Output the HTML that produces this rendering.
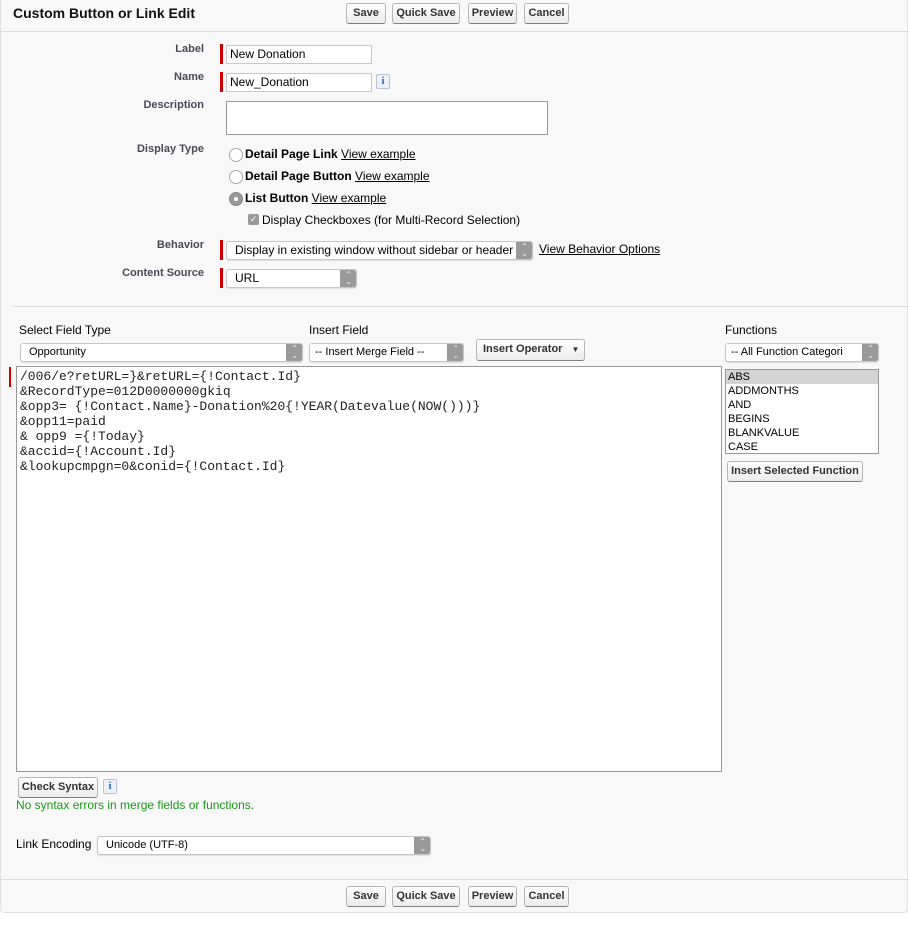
<!DOCTYPE html>
<html><head><style>
*{box-sizing:border-box;margin:0;padding:0}
body{width:908px;height:949px;background:#fff;font-family:"Liberation Sans",Arial,sans-serif;font-size:12px;color:#000;position:relative;overflow:hidden}
.a{position:absolute}
#panel{left:0;top:0;width:908px;height:913px;background:#f8f8f8;border:1px solid #e0e0e0;border-top:none;border-radius:0 0 4px 4px}
.hr{position:absolute;height:1px;background:#dcdcdc}
.btn{position:absolute;height:21px;border:1px solid #b5b5b5;border-bottom-color:#7f7f7f;border-radius:3px;background:linear-gradient(#fff,#ececec);font-weight:bold;font-size:11px;color:#333;text-align:center;line-height:19px}
.lbl{position:absolute;right:704px;font-weight:bold;font-size:11px;color:#4a4a56;text-align:right;white-space:nowrap}
.req{position:absolute;width:3px;height:20px;background:#c00}
.inp{position:absolute;height:19px;background:#fff;border:1px solid #c8c8c8;font-size:12px;padding-left:3px;line-height:17px}
.sel{position:absolute;height:19px;background:#fff;border:1px solid #c6c6c6;border-radius:3px;font-size:12px;padding-left:8px;line-height:17px;box-shadow:0 1px 1px #ddd;overflow:hidden;white-space:nowrap}
.sel:after{content:"";position:absolute;right:0;top:0;width:16px;height:17px;background:#9a9a9a;border-radius:0 2px 2px 0}
.sel i{position:absolute;right:4px;top:1px;z-index:2;color:#eee;font-style:normal;font-size:8px;line-height:7px;text-align:center}
.rad{position:absolute;width:14px;height:14px;border-radius:50%;border:1px solid #aaa;background:#fff}
.t{position:absolute;white-space:nowrap}
u{text-decoration:underline}
.info{position:absolute;width:14px;height:15px;border:1px solid #b8c4d4;border-radius:2px;background:#eef2f8;color:#2a6bd1;font-family:"Liberation Serif",serif;font-weight:bold;font-size:11px;text-align:center;line-height:13px}
.mono{font-family:"Liberation Mono",monospace;font-size:13px;line-height:15px;color:#222}
</style></head><body>
<div id="panel" class="a"></div>
<div class="t" style="left:13px;top:5px;font-size:14px;font-weight:bold;color:#111">Custom Button or Link Edit</div>
<div class="btn" style="left:346px;top:3px;width:40px">Save</div>
<div class="btn" style="left:392px;top:3px;width:68px">Quick Save</div>
<div class="btn" style="left:468px;top:3px;width:49px">Preview</div>
<div class="btn" style="left:524px;top:3px;width:45px">Cancel</div>
<div class="hr" style="left:1px;top:31px;width:907px"></div>

<div class="lbl" style="top:43px">Label</div>
<div class="req" style="left:220px;top:44px"></div>
<div class="inp" style="left:226px;top:45px;width:146px">New Donation</div>
<div class="lbl" style="top:71px">Name</div>
<div class="req" style="left:220px;top:72px"></div>
<div class="inp" style="left:226px;top:73px;width:146px">New_Donation</div>
<div class="info" style="left:376px;top:74px">i</div>
<div class="lbl" style="top:99px">Description</div>
<div class="inp" style="left:226px;top:101px;width:322px;height:34px;border-color:#999"></div>
<div class="lbl" style="top:143px">Display Type</div>
<div class="rad" style="left:229px;top:148px"></div>
<div class="t" style="left:245px;top:147px"><b>Detail Page Link</b> <u>View example</u></div>
<div class="rad" style="left:229px;top:170px"></div>
<div class="t" style="left:245px;top:169px"><b>Detail Page Button</b> <u>View example</u></div>
<div class="rad" style="left:229px;top:192px;background:#999;border-color:#888"><div style="position:absolute;left:4px;top:4px;width:4px;height:4px;background:#fff;border-radius:50%"></div></div>
<div class="t" style="left:245px;top:191px"><b>List Button</b> <u>View example</u></div>
<div class="a" style="left:248px;top:214px;width:11px;height:11px;background:#999;border-radius:2px;color:#fff;font-size:9px;line-height:11px;text-align:center">✓</div>
<div class="t" style="left:262px;top:213px">Display Checkboxes (for Multi-Record Selection)</div>
<div class="lbl" style="top:239px">Behavior</div>
<div class="req" style="left:220px;top:240px"></div>
<div class="sel" style="left:226px;top:241px;width:307px">Display in existing window without sidebar or header<i>⌃<br>⌄</i></div>
<div class="t" style="left:539px;top:242px"><u>View Behavior Options</u></div>
<div class="lbl" style="top:267px">Content Source</div>
<div class="req" style="left:220px;top:268px"></div>
<div class="sel" style="left:226px;top:269px;width:131px">URL<i>⌃<br>⌄</i></div>
<div class="hr" style="left:13px;top:306px;width:895px"></div>

<div class="t" style="left:19px;top:323px">Select Field Type</div>
<div class="t" style="left:309px;top:323px">Insert Field</div>
<div class="t" style="left:725px;top:323px">Functions</div>
<div class="sel" style="left:20px;top:343px;width:283px;font-size:11px">Opportunity<i>⌃<br>⌄</i></div>
<div class="sel" style="left:309px;top:343px;width:155px;padding-left:5px;font-size:11px">-- Insert Merge Field --<i>⌃<br>⌄</i></div>
<div class="btn" style="left:476px;top:339px;width:109px;height:22px;text-align:left;padding-left:6px">Insert Operator <span style="font-size:8px;margin-left:6px">▼</span></div>
<div class="sel" style="left:725px;top:343px;width:154px;padding-left:5px;font-size:11px">-- All Function Categori<i>⌃<br>⌄</i></div>
<div class="req" style="left:9px;top:367px;width:2px;height:20px"></div>
<div class="inp mono" style="left:16px;top:366px;width:706px;height:406px;border-color:#999;padding:2px 3px">/006/e?retURL=}&amp;retURL={!Contact.Id}<br>&amp;RecordType=012D0000000gkiq<br>&amp;opp3= {!Contact.Name}-Donation%20{!YEAR(Datevalue(NOW()))}<br>&amp;opp11=paid<br>&amp; opp9 ={!Today}<br>&amp;accid={!Account.Id}<br>&amp;lookupcmpgn=0&amp;conid={!Contact.Id}</div>
<div class="a" style="left:725px;top:369px;width:154px;height:85px;background:#fff;border:1px solid #999;font-size:11px;line-height:14px">
<div style="background:#d4d4d4;padding-left:2px">ABS</div>
<div style="padding-left:2px">ADDMONTHS</div><div style="padding-left:2px">AND</div><div style="padding-left:2px">BEGINS</div><div style="padding-left:2px">BLANKVALUE</div><div style="padding-left:2px">CASE</div></div>
<div class="btn" style="left:727px;top:461px;width:136px">Insert Selected Function</div>

<div class="btn" style="left:18px;top:777px;width:80px">Check Syntax</div>
<div class="info" style="left:103px;top:779px">i</div>
<div class="t" style="left:16px;top:798px;color:#1a9a1a">No syntax errors in merge fields or functions.</div>
<div class="t" style="left:16px;top:837px">Link Encoding</div>
<div class="sel" style="left:97px;top:836px;width:334px;font-size:11px">Unicode (UTF-8)<i>⌃<br>⌄</i></div>
<div class="hr" style="left:1px;top:879px;width:907px"></div>
<div class="btn" style="left:346px;top:886px;width:40px">Save</div>
<div class="btn" style="left:392px;top:886px;width:68px">Quick Save</div>
<div class="btn" style="left:468px;top:886px;width:49px">Preview</div>
<div class="btn" style="left:524px;top:886px;width:45px">Cancel</div>
</body></html>
